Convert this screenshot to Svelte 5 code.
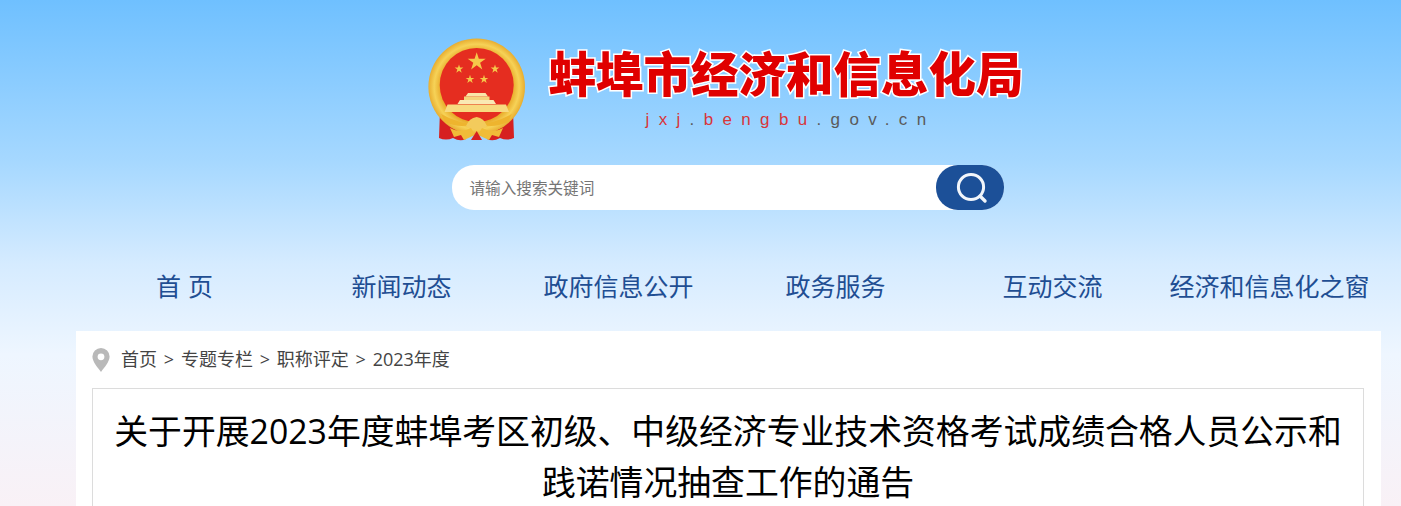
<script>
  const nav = ["首 页", "新闻动态", "政府信息公开", "政务服务", "互动交流", "经济和信息化之窗"];
  const crumbs = ["首页", "专题专栏", "职称评定", "2023年度"];
  const stars = [
    { x: 48.7, y: 23.7, r: 9.5 },
    { x: 31, y: 31, r: 4.6 },
    { x: 67, y: 31, r: 4.6 },
    { x: 42, y: 41.3, r: 4.6 },
    { x: 56, y: 41.3, r: 4.6 }
  ];

  function star(cx, cy, r) {
    let pts = [];
    for (let i = 0; i < 10; i++) {
      const rad = i % 2 ? r * 0.38 : r;
      const a = (Math.PI / 5) * i - Math.PI / 2;
      pts.push((cx + rad * Math.cos(a)).toFixed(2) + "," + (cy + rad * Math.sin(a)).toFixed(2));
    }
    return pts.join(" ");
  }
</script>

<div class="page">
  <header class="head">
    <div class="brand">
      <svg class="emblem" viewBox="0 0 98 104" aria-hidden="true">
        <defs>
          <radialGradient id="ring" cx="50%" cy="50%" r="50%">
            <stop offset="75%" stop-color="#e9ac2c" />
            <stop offset="88%" stop-color="#f6d257" />
            <stop offset="100%" stop-color="#e8ad30" />
          </radialGradient>
        </defs>
        <path d="M12 72 L11 100 Q18 103 25 100 Q32 104 38 101 L30 84 Z" fill="#d62020" />
        <path d="M85 72 L86 100 Q79 103 72 100 Q65 104 59 101 L66 84 Z" fill="#d62020" />
        <circle cx="48.7" cy="48.7" r="48.3" fill="url(#ring)" />
        <circle cx="48.7" cy="47" r="37" fill="#e52d20" />
        {#each stars as s}
          <polygon points={star(s.x, s.y, s.r)} fill="#f5c84a" />
        {/each}
        <path d="M40 55 H57.5 L60 58.5 H37.5 Z" fill="#f9e6a8" />
        <path d="M36 58.5 H61.5 V62 H36 Z" fill="#f4d47c" />
        <path d="M32 62 H65.5 L68 66 H29.5 Z" fill="#fae9b4" />
        <path d="M19.5 66.5 H78 L81 74 H16.5 Z" fill="#f8da80" />
        <path d="M13 76 Q48.7 96 84 76 L80 84 Q66 90 56 87 L48.7 80 L41 87 Q31 90 17 84 Z" fill="#eeb42e" />
        <path d="M38 88 Q41 80 48.7 79 Q56 80 59 88 Q54 92 48.7 92 Q43 92 38 88 Z" fill="#f3cb5c" />
        <path d="M22 90 Q32 96 43 90 L47 97 L36 102 L33 97 L26 99 Z" fill="#f0bc38" />
        <path d="M75 90 Q65 96 54 90 L50 97 L61 102 L64 97 L71 99 Z" fill="#f0bc38" />
        <path d="M43 102 L48.7 93 L54 102 Z" fill="#d62020" />
      </svg>
      <div class="names">
        <h1>蚌埠市经济和信息化局</h1>
        <p><span class="red">jxj</span><span>.</span><span class="red">bengbu</span><span>.gov.cn</span></p>
      </div>
    </div>

    <div class="search">
      <span class="hint">请输入搜索关键词</span>
      <button type="button" aria-label="搜索">
        <svg viewBox="0 0 34 34" width="34" height="34">
          <circle cx="16" cy="16" r="12.6" fill="none" stroke="#f2f6fb" stroke-width="3" />
          <path d="M25.5 25.5 L30 30" stroke="#f2f6fb" stroke-width="3.4" stroke-linecap="round" />
        </svg>
      </button>
    </div>
  </header>

  <nav class="nav">
    {#each nav as item}
      <span>{item}</span>
    {/each}
  </nav>

  <main class="content">
    <div class="crumbs">
      <svg class="pin" viewBox="0 0 18 24" aria-hidden="true">
        <path fill-rule="evenodd" d="M9 0a8.6 8.6 0 0 1 8.6 8.6C17.6 14 12 20 9 24 6 20 .4 14 .4 8.6A8.6 8.6 0 0 1 9 0Zm0 5.4a3.4 3.4 0 1 0 0 6.8 3.4 3.4 0 0 0 0-6.8Z" fill="#b9b9b9" />
      </svg>
      <div class="trail">
        {#each crumbs as c, i}
          <span>{c}</span>
          {#if i < crumbs.length - 1}<span>&gt;</span>{/if}
        {/each}
      </div>
    </div>
    <article class="box">
      <h2>关于开展2023年度蚌埠考区初级、中级经济专业技术资格考试成绩合格人员公示和践诺情况抽查工作的通告</h2>
    </article>
  </main>
</div>

<style>
  :global(body) {
    margin: 0;
    font-family: "Liberation Sans", "Noto Sans CJK SC", sans-serif;
  }

  .page {
    height: 506px;
    overflow: hidden;
    background: linear-gradient(180deg, #6fc0ff 0%, #a6d8ff 32%, #d5ebff 52%, #eef6ff 70%, #f9f1f6 100%);
  }

  .head {
    display: flex;
    flex-direction: column;
    align-items: center;
    margin: 0 21px 0 76px;
    padding-top: 38px;
  }

  .brand {
    display: flex;
    align-items: flex-start;
    gap: 23px;
    margin-left: -3px;
  }

  .emblem {
    width: 98px;
    height: 104px;
    flex: none;
  }

  .names {
    padding-top: 6px;
    width: 477px;
  }

  h1 {
    margin: 0;
    font-family: "Noto Sans CJK SC", sans-serif;
    font-size: 47.5px;
    line-height: 56px;
    font-weight: 900;
    color: #e00000;
    white-space: nowrap;
    -webkit-text-stroke: 3px #fff;
    paint-order: stroke fill;
    filter: blur(0.3px);
  }

  .names p {
    margin: 10px 0 0;
    padding-left: 97px;
    font-size: 17px;
    line-height: 20px;
    letter-spacing: 9.35px;
    white-space: nowrap;
    color: #5a5a5a;
  }

  .red {
    color: #d9363a;
  }

  .search {
    display: flex;
    justify-content: space-between;
    align-items: stretch;
    width: 552px;
    height: 45px;
    margin-top: 23px;
    background: #fff;
    border-radius: 22px;
  }

  .hint {
    padding-left: 17.5px;
    font-size: 15.6px;
    line-height: 47px;
    color: #757575;
  }

  .search button {
    display: flex;
    align-items: center;
    justify-content: center;
    width: 68px;
    padding: 0 0 0 3px;
    border: none;
    border-radius: 22px;
    background: #1c5098;
  }

  .nav {
    display: grid;
    grid-template-columns: repeat(6, 1fr);
    margin: 0 23px 0 76px;
    padding-top: 59px;
    height: 62px;
    line-height: 37px;
    font-size: 25px;
    color: #1f4e93;
    text-align: center;
    white-space: nowrap;
  }

  .content {
    margin: 0 20px 0 76px;
    padding: 0 17px 0 16px;
    background: #fff;
  }

  .crumbs {
    display: flex;
    align-items: center;
    gap: 11px;
    height: 57px;
  }

  .pin {
    width: 18px;
    height: 24px;
  }

  .trail {
    display: flex;
    align-items: baseline;
    gap: 6.8px;
    margin-top: -3px;
    font-family: "Open Sans", "Noto Sans CJK SC", sans-serif;
    font-size: 18px;
    color: #444;
  }

  .box {
    border: 1px solid #dcdcdc;
    padding: 17px 10px 0;
  }

  h2 {
    margin: 0;
    font-family: "Open Sans", "Noto Sans CJK SC", sans-serif;
    font-size: 33.85px;
    line-height: 51px;
    font-weight: 400;
    color: #000;
    text-align: center;
  }
</style>
